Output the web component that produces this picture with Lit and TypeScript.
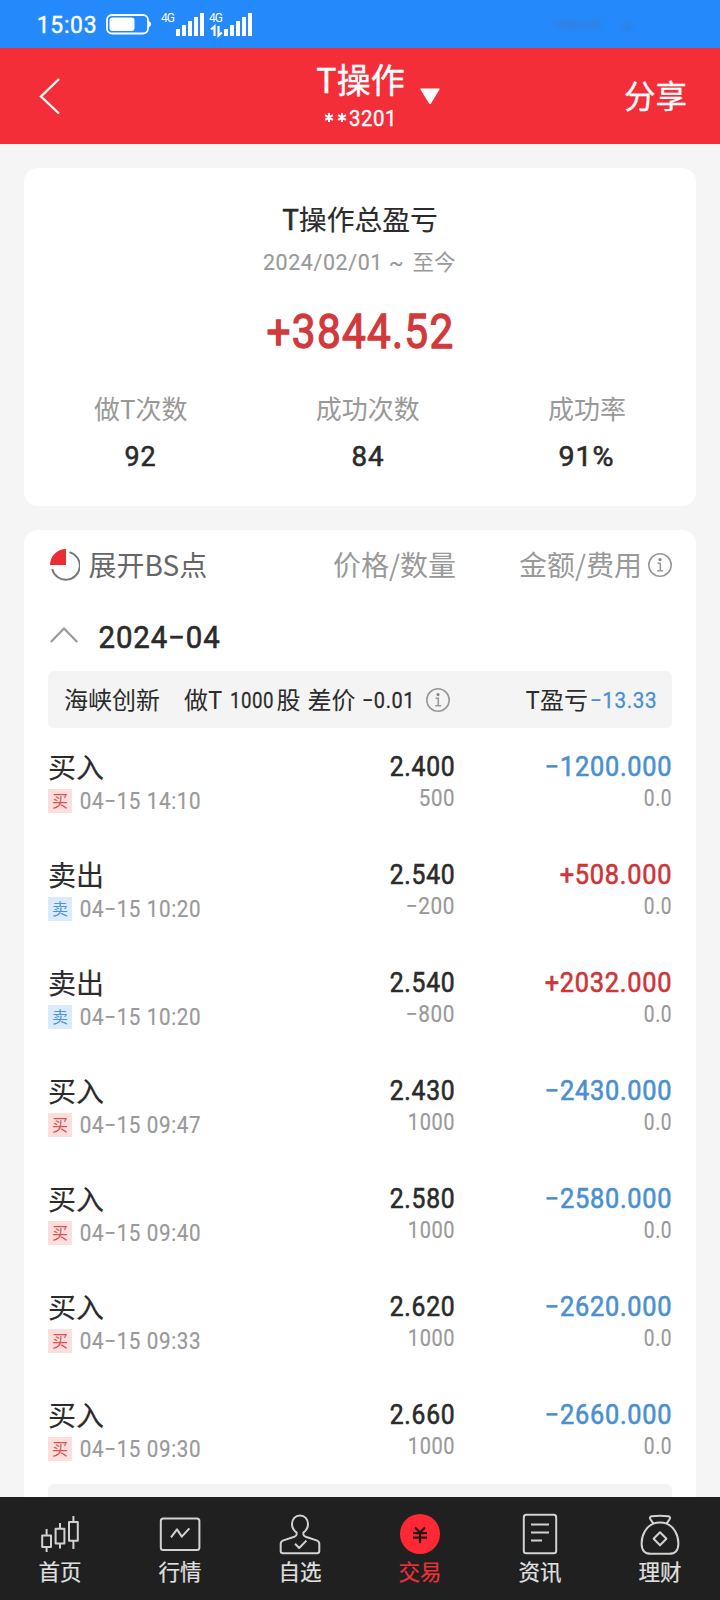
import { LitElement, html, svg, css } from "lit";
import { customElement, property } from "lit/decorators.js";

/** Numeric text set to an exact width; the box is as tall as the digits. */
@customElement("fit-num")
class FitNum extends LitElement {
  @property() text = "";
  @property({ type: Number }) w = 60;
  @property({ type: Number }) size = 24;
  static styles = css`
    :host { display: block; flex: none; -webkit-text-stroke: 0; }
    svg { display: block; overflow: visible; }
    text {
      font-family: Roboto, "Liberation Sans", sans-serif; fill: currentColor; white-space: pre;
      letter-spacing: 0.03em; stroke: currentColor; stroke-width: var(--num-stroke, 0.2px);
    }
  `;
  render() {
    const h = this.size * 0.711;
    const pad = this.size * 0.05;
    return html`<svg width=${this.w} height=${h}>
      <text x=${-pad} y=${h} font-size=${this.size} textLength=${this.w + pad * 2} lengthAdjust="spacingAndGlyphs">${this.text}</text>
    </svg>`;
  }
}

const num = (text: string, w: number, size: number, cls = "") =>
  html`<fit-num class=${cls} .text=${text} .w=${w} .size=${size}></fit-num>`;

const infoIcon = html`<svg class="info" width="24" height="24" viewBox="0 0 24 24" fill="none" stroke="#999" stroke-width="1.6">
  <circle cx="12" cy="12" r="11.2"/><path d="M9.5 10.2h2.8v7.6M9.2 17.8h6"/><circle cx="12" cy="6.6" r="1.6" fill="#888" stroke="none"/>
</svg>`;

const trades = [
  { buy: true, time: "04−15 14:10", price: "2.400", qty: "500", qw: 34, amt: "−1200.000", aw: 125 },
  { buy: false, time: "04−15 10:20", price: "2.540", qty: "−200", qw: 47, amt: "+508.000", aw: 110 },
  { buy: false, time: "04−15 10:20", price: "2.540", qty: "−800", qw: 47, amt: "+2032.000", aw: 125 },
  { buy: true, time: "04−15 09:47", price: "2.430", qty: "1000", qw: 45, amt: "−2430.000", aw: 125 },
  { buy: true, time: "04−15 09:40", price: "2.580", qty: "1000", qw: 45, amt: "−2580.000", aw: 125 },
  { buy: true, time: "04−15 09:33", price: "2.620", qty: "1000", qw: 45, amt: "−2620.000", aw: 125 },
  { buy: true, time: "04−15 09:30", price: "2.660", qty: "1000", qw: 45, amt: "−2660.000", aw: 125 },
];

const tabs = [
  { label: "首页", icon: svg`<rect x="6.2" y="25.4" width="8.8" height="11.6"/><path d="M10.6 19v6.4M10.6 37v5"/>
    <rect x="19.6" y="18.8" width="8.8" height="14.8"/><path d="M24 13v5.8M24 33.6V38.5"/>
    <rect x="33" y="12" width="8.8" height="18.8"/><path d="M37.4 6v6M37.4 30.8V39"/>` },
  { label: "行情", icon: svg`<rect x="4.8" y="8.4" width="38.6" height="31.6" rx="2.5"/><path d="M15 27.4l6-8 4.8 7.2 7.6-8.2"/>` },
  { label: "自选", icon: svg`<path d="M20.6 22.6c-2.8-2-4.6-5-4.6-8.6 0-5 3.4-8.4 8-8.4s8 3.4 8 8.4c0 3.6-1.8 6.6-4.6 8.6v1.6c0 1.4.8 2 2.2 2.5l11 3.7c1.9.7 2.7 1.6 2.7 3.4v7.2c0 1.5-.8 2.300-2.300 2.300H7c-1.500 0-2.300-.8-2.300-2.300v-7.200c0-1.800.8-2.700 2.700-3.400l11-3.700c1.400-.5 2.200-1.100 2.200-2.500z"/><path d="M19 33.8l4.2 4.2 7.2-7.4"/>` },
  { label: "交易", active: true, icon: svg`<circle cx="24" cy="24" r="20" fill="#ff2935" stroke="none"/><path d="M19 17.4l5 5.2 5-5.2M17 23.2h14M17 27.6h14M24 22.6v10.6" stroke="#241418" stroke-width="2.2"/>` },
  { label: "资讯", icon: svg`<rect x="7.8" y="4.8" width="32.4" height="38.4" rx="2.5"/><path d="M15 14.4h18M15 22.4h18M15 30.4h11"/>` },
  { label: "理财", icon: svg`<path d="M17.4 13.6L14.4 9.2c-.9-1.5-.4-2.6 1.2-2.9C21 5.6 27 5.6 32.4 6.3c1.6.3 2.1 1.4 1.2 2.9l-3 4.4M17.4 13.6c2-.8 4.3-1.2 6.6-1.2s4.6.4 6.6 1.2C37.6 16.4 42.4 24.6 42.4 33.4c0 7-3.4 10.4-9.4 10.4H15c-6 0-9.4-3.4-9.4-10.4C5.6 24.6 10.4 16.4 17.4 13.6z"/><path d="M24 22.2l6.4 6.5-6.4 6.5-6.4-6.5z"/>` },
];

@customElement("app-root")
class AppRoot extends LitElement {
  static styles = css`
    :host {
      display: flex; flex-direction: column; height: 1600px; width: 720px; overflow: hidden;
      background: #f5f5f5; color: #2b2b2b; box-sizing: border-box;
      font-family: "Noto Sans CJK SC", sans-serif; line-height: 1; white-space: nowrap;
    }
    .m { --num-stroke: 0.6px; }
    .status { flex: none; height: 48px; background: #248afb; color: #fff; display: flex; align-items: flex-start; padding-left: 38px; }
    .clock { margin-top: 16px; --num-stroke: 0.4px; }
    .battery { margin: 12.5px 0 0 10px; }
    .signal { margin: 8px 0 0 9px; overflow: visible; }
    .signal text { font-family: Roboto, sans-serif; }
    .smudge { margin: 8px 0 0 290px; }
    .head { flex: none; height: 96px; background: #f42e38; color: #fff; display: grid; grid-template-columns: 1fr 90px 1fr; }
    .back { margin: 30px 0 0 39px; }
    .heading { display: flex; flex-direction: column; align-items: center; padding-top: 14px; }
    .title { font-size: 34px; padding-left: 1px; -webkit-text-stroke: 0.4px currentColor; }
    .account { display: flex; gap: 2px; margin-top: 14px; --num-stroke: 0.4px; }
    .right { display: flex; justify-content: space-between; padding: 0 33px 0 15px; }
    .caret { margin-top: 39.5px; }
    .share { font-size: 31.5px; margin-top: 31px; -webkit-text-stroke: 0.3px currentColor; }
    .card { flex: none; background: #fff; border-radius: 14px; margin: 24px 24px 0; box-sizing: border-box; }
    .summary { height: 338px; padding-top: 37px; display: flex; flex-direction: column; align-items: center; }
    .sumTitle { font-size: 27.8px; -webkit-text-stroke: 0.15px currentColor; }
    .bold { -webkit-text-stroke-width: 0.7px; }
    .range { margin-top: 18px; height: 22px; display: flex; align-items: center; gap: 9px; color: #999; font-size: 21.5px; }
    .today { padding-bottom: 3px; }
    .total { margin-top: 41px; color: #d13a3c; --num-stroke: 1.3px; }
    .stats { margin-top: 47px; align-self: stretch; padding: 0 70px; display: flex; justify-content: space-between; }
    .stat { display: flex; flex-direction: column; align-items: center; gap: 25.5px; }
    .label { font-size: 26px; color: #999; }
    .list { flex: 1; min-height: 0; border-radius: 14px 14px 0 0; padding: 0 24px; overflow: hidden; }
    .cols { display: grid; grid-template-columns: 1fr 140px 217px; height: 70px; align-items: center; font-size: 28px; color: #999; }
    .cols span, .cell { padding-bottom: 2px; }
    .expand { display: flex; align-items: center; gap: 8.5px; color: #666; }
    .cell { text-align: right; transform: translateX(1px); }
    .fee { display: flex; align-items: center; justify-content: flex-end; gap: 6px; }
    .month { height: 71px; display: flex; align-items: flex-start; }
    .up { margin: 27px 22px 0 2px; }
    .monthNum { margin-top: 26px; }
    .bar { height: 57px; border-radius: 6px; background: #f4f4f4; display: flex; align-items: center; font-size: 24px; padding: 0 16px; box-sizing: border-box; }
    .bar span { padding-bottom: 2px; }
    .bar fit-num { --num-stroke: 0.3px; }
    .deal { margin-left: 24px; display: flex; align-items: center; }
    .g1 { margin-left: 9px; }
    .g2 { margin-left: 7px; }
    .g3 { margin: 0 12px 0 8px; }
    .shares { margin-left: 3px; }
    .profit { margin-left: auto; display: flex; align-items: center; gap: 3px; }
    .row { height: 108px; display: grid; grid-template-columns: 1fr 140px 217px; }
    .side { font-size: 28px; margin-top: 24px; -webkit-text-stroke: 0.15px currentColor; }
    .when { display: flex; align-items: center; gap: 9px; color: #999; margin-top: 9px; }
    .tag { width: 24px; height: 24px; box-sizing: border-box; font-size: 16px; line-height: 22.5px; text-align: center; }
    .tag.buy { background: #fcdedd; color: #d6524f; }
    .tag.sell { background: #d9ebfc; color: #4d95d8; }
    .figures { display: flex; flex-direction: column; align-items: flex-end; padding: 29px 1px 0 0; gap: 14px; }
    .muted { color: #999; }
    .blue { color: #4a8fd0; }
    .red { color: #cf3437; }
    .next { height: 57px; border-radius: 6px; background: #f4f4f4; }
    .nav { flex: none; height: 103px; background: #202020; display: grid; grid-template-columns: repeat(6, 1fr); color: #e0e0e0; }
    .tab { display: flex; flex-direction: column; align-items: center; padding-top: 13px; font-size: 21.5px; gap: 2px; -webkit-text-stroke: 0.2px currentColor; }
    .tab.active { color: #f0303a; }
    .tab svg { fill: none; stroke: #d2d2d2; stroke-width: 2; stroke-linejoin: round; }
    svg { display: block; flex: none; }
  `;

  private bars(x: number) {
    return [7, 11, 15, 19, 23].map((h, i) => svg`<rect x=${x + i * 6} y=${28 - h} width="4" height=${h} fill="#fff"/>`);
  }

  render() {
    return html`
      <div class="status">
        ${num("15:03", 58, 23.5, "clock")}
        <svg class="battery" width="46" height="22" viewBox="0 0 46 22">
          <rect x="1" y="2" width="41" height="18.5" rx="5" fill="none" stroke="#fff" stroke-width="1.8"/>
          <rect x="3.5" y="4.5" width="25" height="13.5" rx="3" fill="#fff"/><path d="M42 8q3 .5 3 3t-3 3z" fill="#fff"/>
        </svg>
        <svg class="signal" width="94" height="30" viewBox="0 0 94 30">
          <text x="0" y="13.500" font-size="12" fill="#fff" textLength="14">4G</text>${this.bars(15)}
          <text x="48" y="13.500" font-size="12" fill="#fff" textLength="14">4G</text>${this.bars(63)}
          <path d="M50 21.5L53.5 18.5V28M57.5 18v9.5L61 24.5" fill="none" stroke="#fff" stroke-width="2.2"/>
        </svg>
        <svg class="smudge" width="94" height="30" viewBox="0 0 94 30">
          <defs><filter id="b"><feGaussianBlur stdDeviation="2.5"/></filter></defs>
          <g filter="url(#b)" fill="#4a6fc0" opacity=".3"><ellipse cx="26" cy="17" rx="17" ry="5"/><ellipse cx="50" cy="16" rx="7" ry="6"/><ellipse cx="82" cy="19" rx="6" ry="5"/></g>
        </svg>
      </div>
      <div class="head">
        <svg class="back" width="22" height="37" viewBox="0 0 22 37" fill="none" stroke="#fff" stroke-width="2.3"><path d="M20 1L2 18.5L20 35.5"/></svg>
        <div class="heading">
          <div class="title">T操作</div>
          <div class="account">
            <svg width="23" height="16" viewBox="0 0 23 16" stroke="#fff" stroke-width="2"><path d="M4 3v9M.1 5.2l7.8 4.6M.1 9.8l7.8-4.6M17 3v9M13.1 5.2l7.8 4.6M13.1 9.8l7.8-4.6"/></svg>
            ${num("3201", 46, 22.5)}
          </div>
        </div>
        <div class="right">
          <svg class="caret" width="20" height="17" viewBox="0 0 20 17"><path d="M1 .5h18q1 0 .5 1L11 15.5q-1 1-2 0L.5 1.5q-.5-1 .5-1z" fill="#fff"/></svg>
          <div class="share">分享</div>
        </div>
      </div>

      <div class="card summary">
        <div class="sumTitle"><span class="bold">T</span>操作总盈亏</div>
        <div class="range">${num("2024/02/01 ~", 139, 22.5)}<span class="today">至今</span></div>
        ${num("+3844.52", 183, 48, "total")}
        <div class="stats">
          <div class="stat"><div class="label">做T次数</div>${num("92", 29, 28, "m")}</div>
          <div class="stat"><div class="label">成功次数</div>${num("84", 30, 28, "m")}</div>
          <div class="stat"><div class="label">成功率</div>${num("91%", 53, 28, "m")}</div>
        </div>
      </div>

      <div class="card list">
        <div class="cols">
          <div class="expand">
            <svg width="32" height="32" viewBox="0 0 32 32"><path d="M21.5 3.2A14 14 0 1 1 4.2 20" fill="none" stroke="#777" stroke-width="1.9"/><path d="M18 0V16H2C2 7 9 0 18 0z" fill="#ea2d30"/></svg>
            <span>展开BS点</span>
          </div>
          <div class="cell">价格/数量</div>
          <div class="fee"><span>金额/费用</span>${infoIcon}</div>
        </div>
        <div class="month">
          <svg class="up" width="28" height="16" viewBox="0 0 28 16" fill="none" stroke="#999" stroke-width="2.2"><path d="M.8 15L14 1.5L27.2 15"/></svg>
          ${num("2024−04", 119, 30.5, "monthNum m")}
        </div>
        <div class="bar">
          <span>海峡创新</span>
          <div class="deal">
            <span>做T</span>${num("1000", 42, 22.5, "g1")}<span class="shares">股</span><span class="g2">差价</span>${num("−0.01", 51, 22.5, "g3")}${infoIcon}
          </div>
          <div class="profit"><span>T盈亏</span>${num("−13.33", 65, 22.5, "blue")}</div>
        </div>
        ${trades.map((t) => html`
          <div class="row">
            <div>
              <div class="side">${t.buy ? "买入" : "卖出"}</div>
              <div class="when"><span class="tag ${t.buy ? "buy" : "sell"}">${t.buy ? "买" : "卖"}</span>${num(t.time, 119, 23)}</div>
            </div>
            <div class="figures">${num(t.price, 63, 27, "m")}${num(t.qty, t.qw, 23, "muted")}</div>
            <div class="figures">${num(t.amt, t.aw, 27, t.amt[0] === "+" ? "red m" : "blue m")}${num("0.0", 26, 23, "muted")}</div>
          </div>`)}
        <div class="next"></div>
      </div>

      <div class="nav">
        ${tabs.map((t) => html`<div class="tab ${t.active ? "active" : ""}"><svg width="48" height="48" viewBox="0 0 48 48">${t.icon}</svg><span>${t.label}</span></div>`)}
      </div>
    `;
  }
}
